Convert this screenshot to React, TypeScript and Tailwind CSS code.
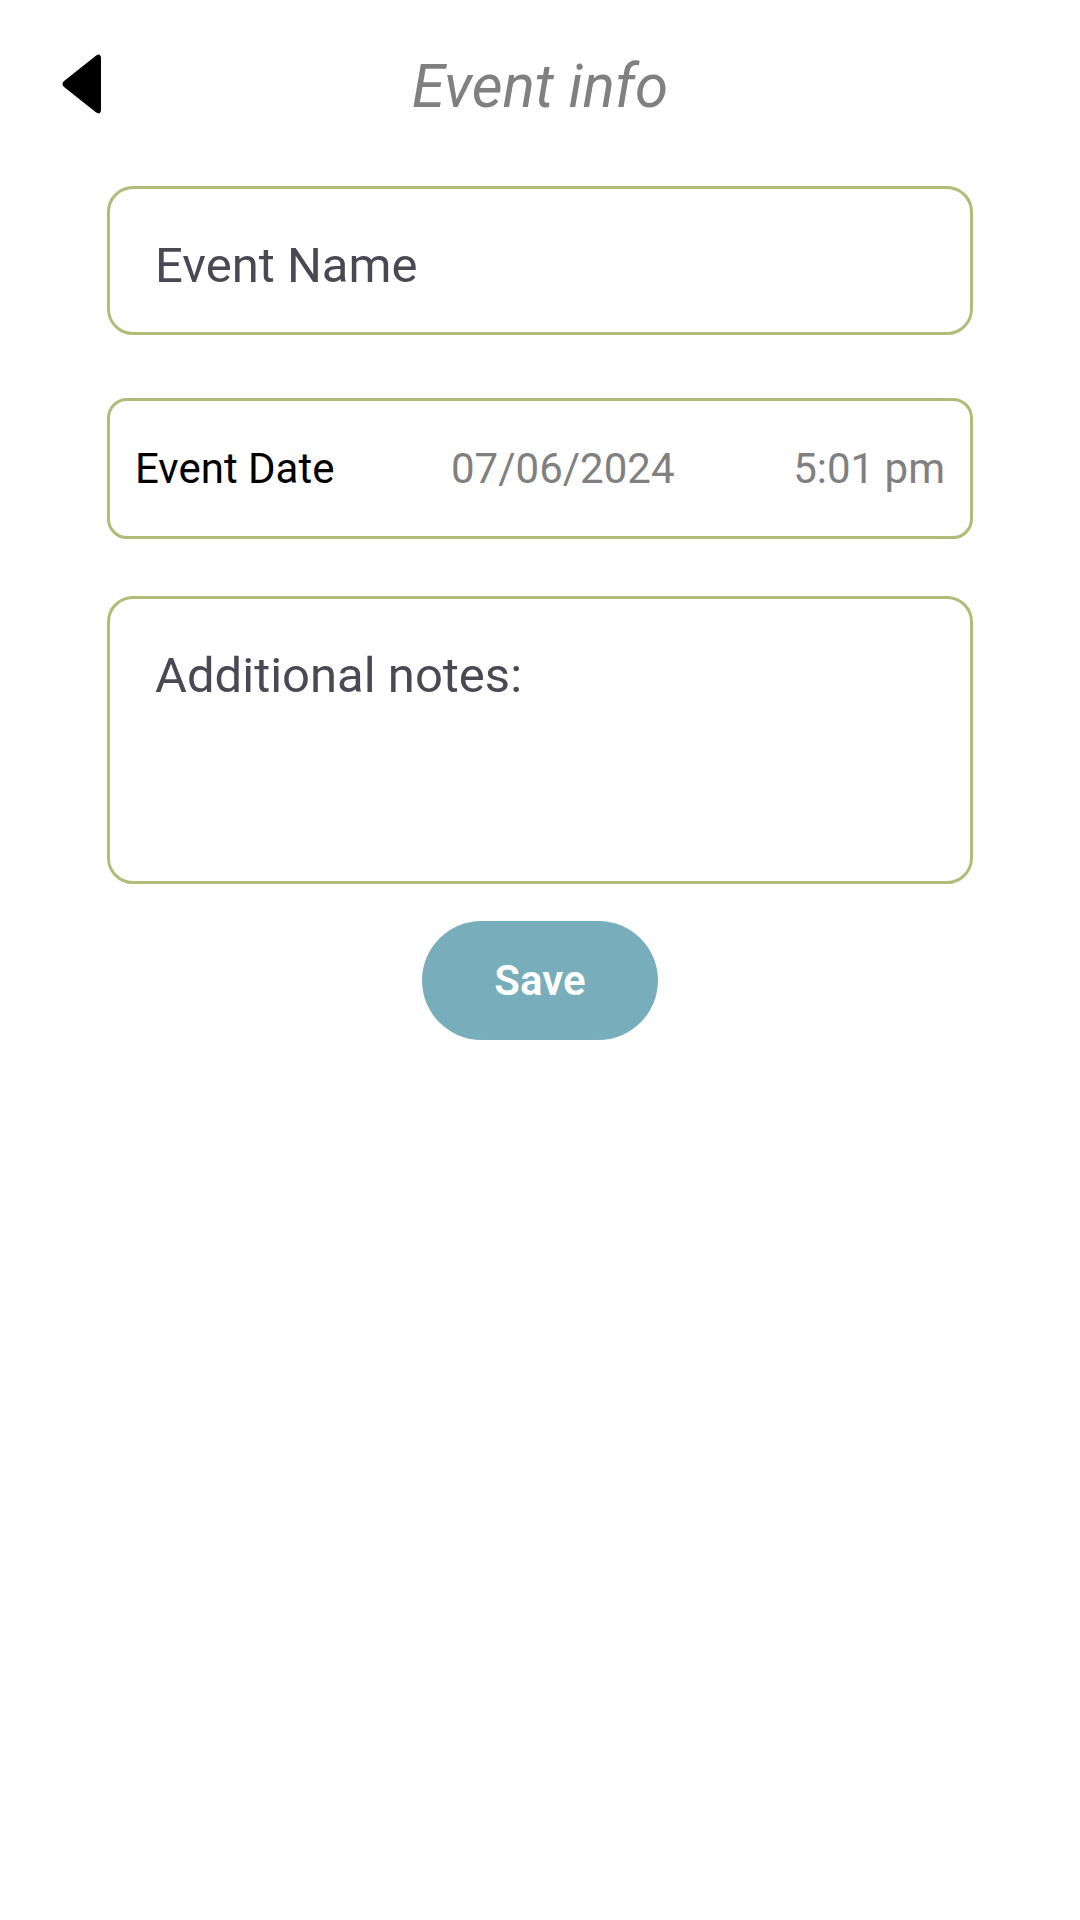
export default function App() {
  return (
    <div className="w-[1080px] h-[1920px] bg-white" style={{ fontFamily: "Roboto, 'Noto Sans', sans-serif" }}>
      <div className="relative h-[152px]">
        <button className="absolute left-[56px] top-[50px] w-[48px] h-[68px] flex items-center justify-center">
          <svg width="44" height="64" viewBox="0 0 44 64">
            <path d="M42 6 Q42 2 38.5 4.5 L7 29.5 Q4 32 7 34.5 L38.5 59.5 Q42 62 42 58 Z" fill="#000" stroke="#000" strokeWidth="2" strokeLinejoin="round" />
          </svg>
        </button>
        <div className="pt-[52px] text-center italic text-[60px] leading-[70px] text-[#808080]">Event info</div>
      </div>
      <div className="w-[866px] mx-auto flex flex-col">
        <div className="mt-[34px] h-[149px] border-[3px] border-[#b0bc78] rounded-[26px] pl-[45px] pt-[48px] text-[49px] leading-[57px] text-[#4a4853]">
          Event Name
        </div>
        <div className="mt-[63px] h-[141px] border-[3px] border-[#b0bc78] rounded-[20px] pl-[25px] pr-[25px] flex items-center text-[42px] leading-[49px]">
          <span className="w-[316px] text-black">Event Date</span>
          <span className="text-[#808080]">07/06/2024</span>
          <span className="ml-auto text-[#808080]">5:01 pm</span>
        </div>
        <div className="mt-[57px] h-[288px] border-[3px] border-[#b0bc78] rounded-[26px] pl-[45px] pt-[48px] text-[49px] leading-[57px] text-[#4a4853]">
          Additional notes:
        </div>
        <div className="mt-[37px] flex justify-center">
          <button className="w-[236px] h-[119px] rounded-full bg-[#78aebb] text-white text-[42px] font-semibold">
            Save
          </button>
        </div>
      </div>
    </div>
  );
}
